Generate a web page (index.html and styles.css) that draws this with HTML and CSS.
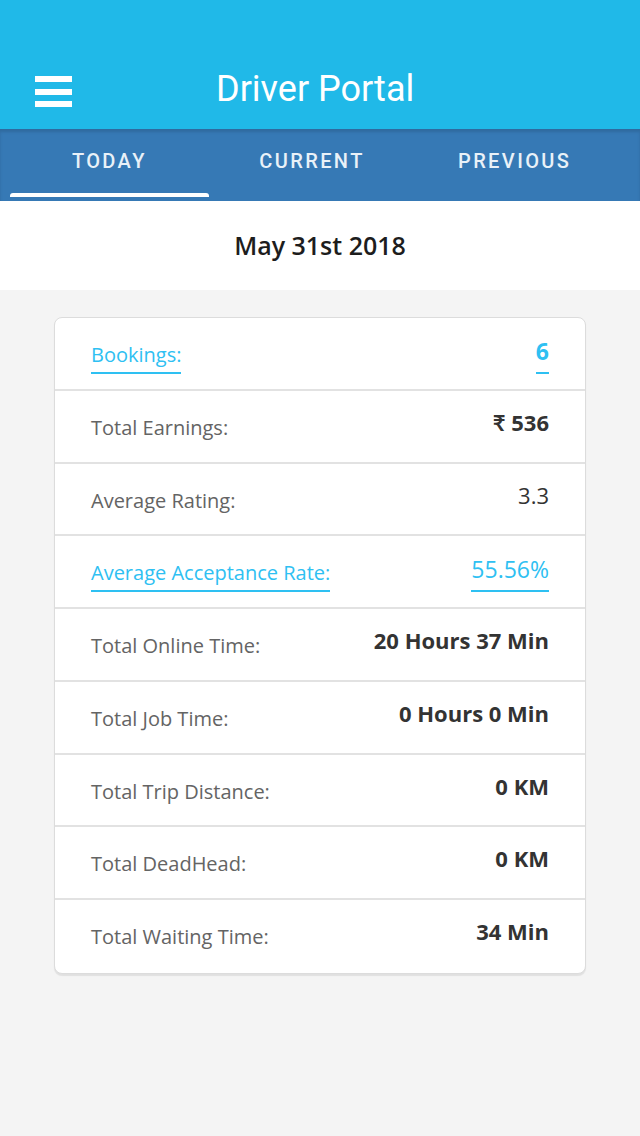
FILE: index.html
```html
<!DOCTYPE html>
<html lang="en">
<head>
    <meta charset="UTF-8">
    <meta name="viewport" content="width=device-width, initial-scale=1.0">
    <title>Driver Portal</title>
    <link rel="stylesheet" href="styles.css">
</head>
<body>
    <!-- header -->
    <div class="app-bar">
        <div class="menu-btn">
            <span></span><span></span><span></span>
        </div>
        <div class="app-title">Driver Portal</div>
    </div>

    <!-- tabs -->
    <div class="tabs">
        <div class="tab active">TODAY</div>
        <div class="tab">CURRENT</div>
        <div class="tab">PREVIOUS</div>
    </div>

    <div class="date-bar">May 31st 2018</div>

    <div class="page">
        <div class="stats-card">
            <div class="stat-row link">
                <span class="stat-label">Bookings:</span>
                <span class="stat-value">6</span>
            </div>
            <div class="stat-row">
                <span class="stat-label">Total Earnings:</span>
                <span class="stat-value">₹ 536</span>
            </div>
            <div class="stat-row">
                <span class="stat-label">Average Rating:</span>
                <span class="stat-value light">3.3</span>
            </div>
            <div class="stat-row link">
                <span class="stat-label">Average Acceptance Rate:</span>
                <span class="stat-value light">55.56%</span>
            </div>
            <div class="stat-row">
                <span class="stat-label">Total Online Time:</span>
                <span class="stat-value">20 Hours 37 Min</span>
            </div>
            <div class="stat-row">
                <span class="stat-label">Total Job Time:</span>
                <span class="stat-value">0 Hours 0 Min</span>
            </div>
            <div class="stat-row">
                <span class="stat-label">Total Trip Distance:</span>
                <span class="stat-value">0 KM</span>
            </div>
            <div class="stat-row">
                <span class="stat-label">Total DeadHead:</span>
                <span class="stat-value">0 KM</span>
            </div>
            <div class="stat-row">
                <span class="stat-label">Total Waiting Time:</span>
                <span class="stat-value">34 Min</span>
            </div>
        </div>
    </div>
</body>
</html>
```

FILE: styles.css
```css
* {
    margin: 0;
    padding: 0;
    box-sizing: border-box;
}

body {
    font-family: 'Open Sans', 'Lato', sans-serif;
    background: #f4f4f4;
    color: #333;
    min-height: 1136px;
}

.app-bar {
    height: 129px;
    background: #20b9e8;
    display: flex;
    align-items: flex-end;
    padding: 0 0 19px 35px;
}

.menu-btn {
    width: 37px;
    height: 31px;
    display: flex;
    flex-direction: column;
    justify-content: space-between;
    margin-bottom: 3px;
}

.menu-btn span {
    display: block;
    height: 6px;
    background: white;
}

.app-title {
    font-family: 'Roboto', sans-serif;
    font-size: 36px;
    color: white;
    margin-left: 144px;
    line-height: 42px;
}

.tabs {
    height: 72px;
    background: #3679b5;
    display: flex;
    padding: 0 24px 0 8px;
    box-shadow: inset 0 3px 3px rgba(0,0,0,0.12);
}

.tab {
    flex: 1;
    display: flex;
    justify-content: center;
    padding-top: 20px;
    font-family: 'Roboto', sans-serif;
    font-size: 20px;
    font-weight: 500;
    letter-spacing: 2.4px;
    color: #e9f1f8;
    position: relative;
}

.tab.active::after {
    content: '';
    position: absolute;
    left: 2px;
    right: 2px;
    bottom: 4px;
    height: 4px;
    background: white;
    border-radius: 3px 3px 0 0;
}

.date-bar {
    height: 89px;
    background: white;
    display: flex;
    align-items: center;
    justify-content: center;
    font-size: 25px;
    font-weight: 600;
    color: #1d1d1d;
    padding-bottom: 2px;
}

.page {
    padding: 27px 54px 40px 54px;
}

.stats-card {
    background: white;
    border: 1px solid #dcdcdc;
    border-radius: 8px;
    box-shadow: 0 2px 1px rgba(0,0,0,0.08);
    overflow: hidden;
}

.stat-row {
    height: 72.75px;
    display: flex;
    justify-content: space-between;
    align-items: flex-start;
    padding: 0 36px;
    border-bottom: 2px solid #e2e2e2;
}

.stat-row:last-child {
    border-bottom: none;
}

.stat-label {
    font-size: 20px;
    font-weight: 500;
    line-height: 24px;
    color: #646464;
    margin-top: 25px;
}

.stat-value {
    font-size: 22px;
    line-height: 26px;
    font-weight: 700;
    color: #333;
    margin-top: 18px;
}

.stat-value.light {
    font-weight: 400;
}

.stat-row.link .stat-label,
.stat-row.link .stat-value {
    color: #2ec0f2;
    border-bottom: 2px solid #2ec0f2;
}

.stat-row.link .stat-label {
    margin-top: 25px;
    padding-bottom: 5px;
}

.stat-row.link .stat-value {
    font-size: 23px;
    line-height: 28px;
    margin-top: 19px;
    padding-bottom: 7px;
}
```
